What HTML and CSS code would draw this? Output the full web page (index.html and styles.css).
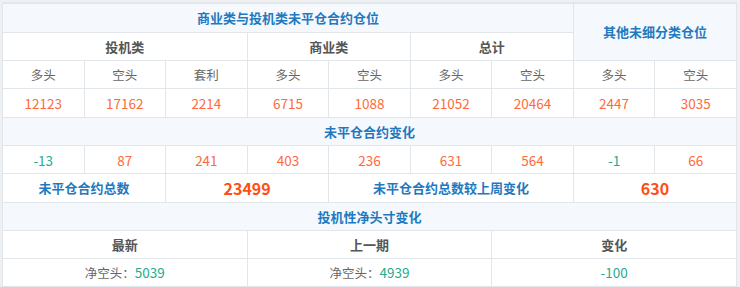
FILE: index.html
```html
<!DOCTYPE html>
<html lang="zh-CN">
<head>
<meta charset="utf-8">
<link rel="stylesheet" href="styles.css">
</head>
<body>
<div class="frame">
<table class="pos">
  <colgroup>
    <col><col><col><col><col><col><col><col><col>
  </colgroup>
  <tr class="title tall">
    <td colspan="7">商业类与投机类未平仓合约仓位</td>
    <td colspan="2" rowspan="2">其他未细分类仓位</td>
  </tr>
  <tr class="group">
    <td colspan="3">投机类</td>
    <td colspan="2">商业类</td>
    <td colspan="2">总计</td>
  </tr>
  <tr class="sub">
    <td>多头</td><td>空头</td><td>套利</td><td>多头</td><td>空头</td><td>多头</td><td>空头</td><td>多头</td><td>空头</td>
  </tr>
  <tr class="nums tall">
    <td class="up">12123</td><td class="up">17162</td><td class="up">2214</td><td class="up">6715</td><td class="up">1088</td><td class="up">21052</td><td class="up">20464</td><td class="up">2447</td><td class="up">3035</td>
  </tr>
  <tr class="title">
    <td colspan="9">未平仓合约变化</td>
  </tr>
  <tr class="nums">
    <td class="down">-13</td><td class="up">87</td><td class="up">241</td><td class="up">403</td><td class="up">236</td><td class="up">631</td><td class="up">564</td><td class="down">-1</td><td class="up">66</td>
  </tr>
  <tr class="total tall">
    <td colspan="2" class="label">未平仓合约总数</td>
    <td colspan="2" class="big">23499</td>
    <td colspan="3" class="label">未平仓合约总数较上周变化</td>
    <td colspan="2" class="big">630</td>
  </tr>
</table>
<table class="net">
  <tr class="title">
    <td colspan="3">投机性净头寸变化</td>
  </tr>
  <tr class="group">
    <td>最新</td><td>上一期</td><td>变化</td>
  </tr>
  <tr class="sub">
    <td>净空头：<span class="down">5039</span></td>
    <td>净空头：<span class="down">4939</span></td>
    <td><span class="down">-100</span></td>
  </tr>
</table>
</div>
</body>
</html>
```
FILE: styles.css
```css
html, body {
  margin: 0;
  padding: 0;
}
body {
  background: #eef0f2;
  width: 740px;
  height: 287px;
  overflow: hidden;
  font-family: "Noto Sans CJK SC", "Noto Sans", sans-serif;
}
.frame {
  margin: 2px 0 0 2px;
  width: 735px;
  background: #fff;
  border-top: 1px solid #e3e8ec;
}
table {
  width: 735px;
  border-collapse: collapse;
  table-layout: fixed;
}
td {
  border: 1px solid #e1e6eb;
  height: 27px;
  padding: 0;
  text-align: center;
  vertical-align: middle;
  font-size: 13px;
  line-height: 16px;
  color: #666;
}
.tall td {
  height: 28px;
}
.net {
  margin-top: -1px;
}
.title td {
  background: #f5f9fe;
  color: #1f79c0;
  font-weight: bold;
}
.group td {
  color: #555;
  font-weight: bold;
}
.sub td {
  font-size: 12.5px;
}
.nums td {
  font-size: 13.5px;
}
.up {
  color: #ff6a3c;
}
.down {
  color: #1fab8c;
}
.sub td .down {
  font-size: 13.5px;
}
.total .label {
  color: #1f79c0;
  font-weight: bold;
}
.total .big {
  color: #ff4e12;
  font-weight: bold;
  font-size: 16px;
}
```
